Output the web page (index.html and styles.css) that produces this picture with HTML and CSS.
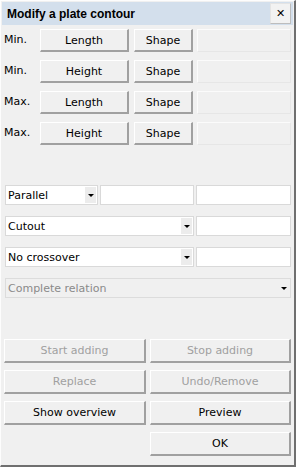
FILE: index.html
```html
<!DOCTYPE html>
<html lang="en">
<head>
    <meta charset="UTF-8">
    <title>Modify a plate contour</title>
    <link rel="stylesheet" href="styles.css">
</head>
<body>
    <div class="dialog">
        <div class="titlebar">
            <span class="title">Modify a plate contour</span>
            <button class="close">&#x2715;</button>
        </div>

        <div class="limits">
            <div class="limit-row">
                <span class="label">Min.</span>
                <button class="btn">Length</button>
                <button class="btn">Shape</button>
                <div class="field"></div>
            </div>
            <div class="limit-row">
                <span class="label">Min.</span>
                <button class="btn">Height</button>
                <button class="btn">Shape</button>
                <div class="field"></div>
            </div>
            <div class="limit-row">
                <span class="label">Max.</span>
                <button class="btn">Length</button>
                <button class="btn">Shape</button>
                <div class="field"></div>
            </div>
            <div class="limit-row">
                <span class="label">Max.</span>
                <button class="btn">Height</button>
                <button class="btn">Shape</button>
                <div class="field"></div>
            </div>
        </div>

        <div class="options">
            <div class="opt-row three">
                <div class="combo"><span>Parallel</span><i class="arrow"></i></div>
                <div class="input"></div>
                <div class="input"></div>
            </div>
            <div class="opt-row two">
                <div class="combo"><span>Cutout</span><i class="arrow"></i></div>
                <div class="input"></div>
            </div>
            <div class="opt-row two">
                <div class="combo"><span>No crossover</span><i class="arrow"></i></div>
                <div class="input"></div>
            </div>
            <div class="opt-row">
                <div class="combo disabled"><span>Complete relation</span><i class="arrow"></i></div>
            </div>
        </div>

        <div class="actions">
            <button class="btn" disabled>Start adding</button>
            <button class="btn" disabled>Stop adding</button>
            <button class="btn" disabled>Replace</button>
            <button class="btn" disabled>Undo/Remove</button>
            <button class="btn">Show overview</button>
            <button class="btn">Preview</button>
            <button class="btn ok">OK</button>
        </div>
    </div>
</body>
</html>
```

FILE: styles.css
```css
body {
    margin: 0;
    font-family: "DejaVu Sans", sans-serif;
    font-size: 11px;
    background-color: #f0f0f0;
}

.dialog {
    box-sizing: border-box;
    width: 296px;
    height: 467px;
    background-color: #f0f0f0;
    border-top: 1px solid #fdfdfd;
    border-left: 1px solid #fdfdfd;
    border-right: 2px solid #6f6f6f;
    border-bottom: 2px solid #6f6f6f;
    padding: 1px 1px 0 1px;
}

.titlebar {
    height: 23px;
    background-color: #d3dfec;
    display: flex;
    align-items: center;
    justify-content: space-between;
    padding: 0 2px 0 5px;
}

.title {
    font-family: "Liberation Sans", sans-serif;
    font-weight: bold;
    font-size: 12px;
    color: #000;
}

.close {
    width: 21px;
    height: 21px;
    padding: 0;
    background-color: #f2f2f2;
    border: 1px solid #e4e4e4;
    border-right-color: #bdbdbd;
    border-bottom-color: #bdbdbd;
    font-size: 11px;
    font-weight: bold;
    color: #000;
}

button {
    font-family: inherit;
}

.btn {
    box-sizing: border-box;
    background-color: #f0f0f0;
    border: 1px solid #ffffff;
    border-right: 2px solid #a0a0a0;
    border-bottom: 2px solid #a0a0a0;
    font-size: 11px;
    color: #000;
    padding: 0;
}

.btn:disabled {
    color: #a0a0a0;
}

.limits {
    display: flex;
    flex-direction: column;
    gap: 8px;
    margin-top: 4px;
    padding-left: 2px;
}

.limit-row {
    display: grid;
    grid-template-columns: 31px 89px 59px 93px;
    column-gap: 5px;
    height: 23px;
}

.label {
    padding-top: 4px;
    color: #000;
}

.field {
    box-sizing: border-box;
    border: 1px solid #fbfbfb;
    border-right-color: #e6e6e6;
    border-bottom-color: #e6e6e6;
    margin-left: -1px;
}

.options {
    display: flex;
    flex-direction: column;
    gap: 11px;
    margin: 40px 2px 0 3px;
}

.opt-row {
    display: grid;
    grid-template-columns: 1fr;
    column-gap: 2px;
    height: 20px;
}

.opt-row.three {
    grid-template-columns: 93px 94px 1fr;
}

.opt-row.two {
    grid-template-columns: 189px 1fr;
}

.combo,
.input {
    box-sizing: border-box;
    background-color: #fff;
    border: 1px solid #d9d9d9;
}

.combo {
    display: flex;
    align-items: center;
    justify-content: space-between;
    padding: 0 1px 0 2px;
    color: #000;
    font-size: 11px;
}

.combo .arrow {
    width: 11px;
    height: 16px;
    background-color: #ececec;
    position: relative;
}

.combo .arrow::after {
    content: "";
    position: absolute;
    left: 3px;
    top: 7px;
    border-left: 3px solid transparent;
    border-right: 3px solid transparent;
    border-top: 3px solid #000;
}

.combo.disabled {
    background-color: #f0f0f0;
    border-color: #dcdcdc;
    color: #8a8a8a;
}

.combo.disabled .arrow {
    background-color: transparent;
}

.actions {
    display: grid;
    grid-template-columns: 142px 141px;
    column-gap: 4px;
    row-gap: 7px;
    grid-auto-rows: 24px;
    margin: 41px 0 0 2px;
}

.ok {
    grid-column: 2;
}
```
